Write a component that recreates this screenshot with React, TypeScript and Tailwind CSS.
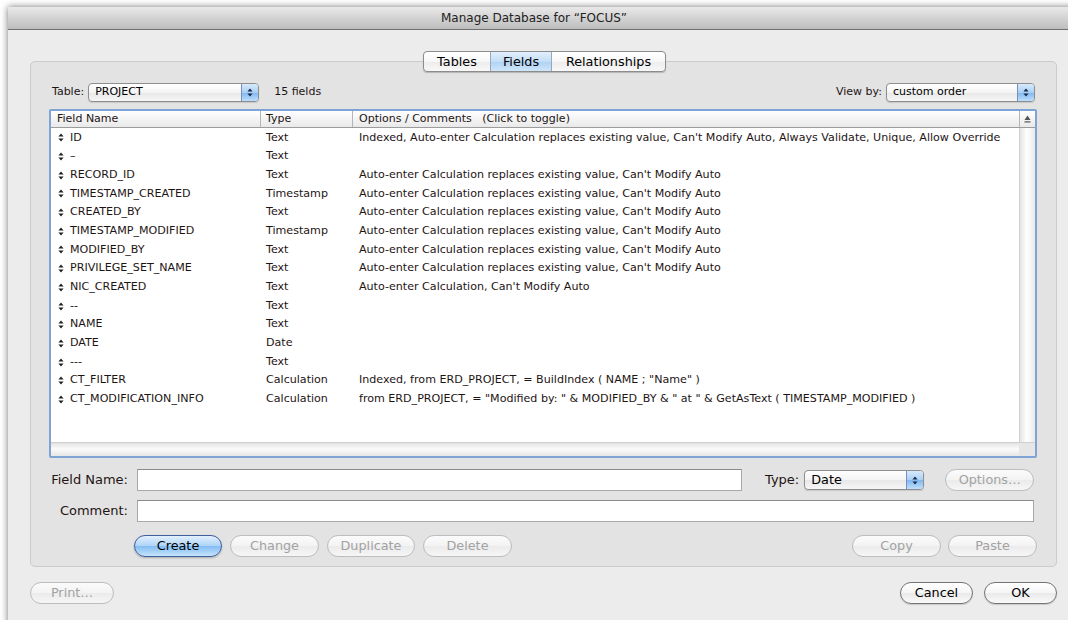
import React from "react";

type Field = { name: string; type: string; options: string };

const AUTO = "Auto-enter Calculation replaces existing value, Can't Modify Auto";

const fields: Field[] = [
  { name: "ID", type: "Text", options: "Indexed, Auto-enter Calculation replaces existing value, Can't Modify Auto, Always Validate, Unique, Allow Override" },
  { name: "–", type: "Text", options: "" },
  { name: "RECORD_ID", type: "Text", options: AUTO },
  { name: "TIMESTAMP_CREATED", type: "Timestamp", options: AUTO },
  { name: "CREATED_BY", type: "Text", options: AUTO },
  { name: "TIMESTAMP_MODIFIED", type: "Timestamp", options: AUTO },
  { name: "MODIFIED_BY", type: "Text", options: AUTO },
  { name: "PRIVILEGE_SET_NAME", type: "Text", options: AUTO },
  { name: "NIC_CREATED", type: "Text", options: "Auto-enter Calculation, Can't Modify Auto" },
  { name: "--", type: "Text", options: "" },
  { name: "NAME", type: "Text", options: "" },
  { name: "DATE", type: "Date", options: "" },
  { name: "---", type: "Text", options: "" },
  { name: "CT_FILTER", type: "Calculation", options: 'Indexed, from ERD_PROJECT, = BuildIndex ( NAME ; "Name" )' },
  { name: "CT_MODIFICATION_INFO", type: "Calculation", options: 'from ERD_PROJECT, = "Modified by: " & MODIFIED_BY & " at " & GetAsText ( TIMESTAMP_MODIFIED )' },
];

const UpDown = ({ className = "" }: { className?: string }) => (
  <svg width="6" height="9" viewBox="0 0 6 9" className={className}>
    <path d="M3 0.5 L5.6 3.6 H0.4 Z M3 8.5 L5.6 5.4 H0.4 Z" fill="currentColor" />
  </svg>
);

const Popup = ({
  value,
  className = "",
  textClass = "text-[11px]",
}: {
  value: string;
  className?: string;
  textClass?: string;
}) => (
  <div
    className={`flex items-stretch overflow-hidden rounded-[4px] border border-[#8e8e8e] bg-[linear-gradient(to_bottom,#ffffff_0%,#f4f4f4_50%,#e8e8e8_51%,#f6f6f6_100%)] shadow-[0_1px_1px_rgba(0,0,0,0.12)] ${className}`}
  >
    <span className={`flex flex-1 items-center truncate pl-[6px] text-black ${textClass}`}>{value}</span>
    <span className="flex w-[17px] items-center justify-center border-l border-[#7a8fb8] bg-[linear-gradient(to_bottom,#d8eafb_0%,#a8d0f6_50%,#7fb7f0_51%,#bfdffb_100%)] text-[#1c2a48]">
      <UpDown />
    </span>
  </div>
);

const Pill = ({
  label,
  width,
  enabled = false,
  primary = false,
}: {
  label: string;
  width: string;
  enabled?: boolean;
  primary?: boolean;
}) => {
  const look = primary
    ? "border-[#3f5f9e] bg-[linear-gradient(to_bottom,#e3f0fd_0%,#afd5f8_48%,#84bdf3_52%,#c6e4fc_100%)] text-black shadow-[0_1px_2px_rgba(0,0,0,0.25)]"
    : enabled
      ? "border-[#747474] bg-[linear-gradient(to_bottom,#ffffff_0%,#f5f5f5_50%,#e9e9e9_51%,#fafafa_100%)] text-black shadow-[0_1px_1px_rgba(0,0,0,0.15)]"
      : "border-[#bdbdbd] bg-[linear-gradient(to_bottom,#fbfbfb_0%,#f3f3f3_50%,#ebebeb_51%,#f6f6f6_100%)] text-[#a2a2a2]";
  return (
    <div className={`flex h-[22px] items-center justify-center rounded-full border text-[12.8px] ${width} ${look}`}>
      {label}
    </div>
  );
};

export default function App() {
  return (
    <div className="h-[620px] w-[1068px] overflow-hidden bg-white pl-2 pt-[7px] font-['DejaVu_Sans',sans-serif] text-[#1e1414]">
      <div className="flex h-[640px] w-[1080px] flex-col bg-[#ececec] shadow-[0_0_7px_rgba(0,0,0,0.55)]">
        {/* title bar */}
        <div className="flex h-[23px] items-center justify-center border-b border-[#6f6f6f] bg-[linear-gradient(to_bottom,#e9e9e9,#bdbdbd)] pr-[28px] text-[12px] text-[#222]">
          Manage Database for “FOCUS”
        </div>

        <div className="flex flex-col pl-[22px] pr-[31px]">
          {/* tabs sitting on the group box edge */}
          <div className="relative z-10 mt-[21px] flex justify-center pl-[2px]">
            <div className="flex h-[21px] overflow-hidden rounded-[4px] border border-[#8c8c8c] bg-[linear-gradient(to_bottom,#ffffff_0%,#f7f7f7_50%,#ececec_51%,#f8f8f8_100%)] text-[12.8px] text-black shadow-[0_1px_1px_rgba(0,0,0,0.2)]">
              <div className="flex w-[66px] items-center justify-center">Tables</div>
              <div className="flex w-[62px] items-center justify-center border-x border-[#9aa6bd] bg-[linear-gradient(to_bottom,#e2effb_0%,#c3def7_50%,#aed2f4_51%,#cfe6fa_100%)]">
                Fields
              </div>
              <div className="flex w-[113px] items-center justify-center">Relationships</div>
            </div>
          </div>

          {/* group box */}
          <div className="-mt-[11px] flex h-[506px] flex-col rounded-[5px] border border-[#cbcbcb] bg-[#e3e3e3] pl-[18px] pr-[19px] pt-[21px]">
            <div className="flex h-[19px] items-center">
              <span className="ml-[3px] text-[11px]">Table:</span>
              <Popup value="PROJECT" className="ml-[4px] h-[19px] w-[171px]" />
              <span className="ml-[15px] text-[11px]">15 fields</span>
              <span className="ml-auto text-[11px]">View by:</span>
              <Popup value="custom order" className="ml-[4px] h-[19px] w-[149px]" />
              <span className="w-[2px]" />
            </div>

            {/* field list */}
            <div className="mt-[7px] flex h-[349px] flex-col rounded-[2px] border-2 border-[#7ea4d6] bg-white">
              <div className="flex h-[17px] border-b border-[#9c9c9c] bg-[linear-gradient(to_bottom,#ffffff,#e9e9e9)] text-[11px] leading-[16px]">
                <div className="w-[210px] border-r border-[#b5b5b5] pl-[6px]">Field Name</div>
                <div className="w-[92px] border-r border-[#b5b5b5] pl-[5px]">Type</div>
                <div className="flex-1 border-r border-[#b5b5b5] pl-[6px]">Options / Comments&nbsp;&nbsp; (Click to toggle)</div>
                <div className="flex w-[15px] items-center justify-center text-[#555]">
                  <svg width="7" height="8" viewBox="0 0 7 8">
                    <path d="M3.5 0.5 L6.5 5 H0.5 Z" fill="currentColor" />
                    <rect x="0.5" y="6.3" width="6" height="1.2" fill="currentColor" />
                  </svg>
                </div>
              </div>

              <div className="flex flex-1">
                <div className="flex flex-1 flex-col pt-[0.5px]">
                  {fields.map((f) => (
                    <div key={f.name} className="flex h-[18.7px] items-center text-[11.1px] whitespace-nowrap">
                      <div className="flex w-[210px] items-center">
                        <UpDown className="ml-[7px] text-[#222]" />
                        <span className="ml-[6px]">{f.name}</span>
                      </div>
                      <div className="w-[92px] pl-[5px]">{f.type}</div>
                      <div className="flex-1 pl-[6px]">{f.options}</div>
                    </div>
                  ))}
                </div>
                <div className="w-[16px] border-l border-[#d0d0d0] bg-[linear-gradient(to_right,#e4e4e4,#ffffff_45%,#e9e9e9)]" />
              </div>

              <div className="flex h-[14px] border-t border-[#cfcfcf]">
                <div className="flex-1 bg-[linear-gradient(to_bottom,#e2e2e2,#fbfbfb_45%,#e6e6e6)]" />
                <div className="w-[16px] bg-[#e6e6e6]" />
              </div>
            </div>

            {/* field editor */}
            <div className="mt-[11px] flex h-[22px] items-center">
              <span className="w-[88px] pr-[9px] text-right text-[13px]">Field Name:</span>
              <div className="h-[22px] w-[605px] border border-[#a8a8a8] border-t-[#8a8a8a] bg-white" />
              <span className="ml-[23px] text-[13px]">Type:</span>
              <Popup value="Date" className="ml-[5px] h-[20px] w-[120px]" textClass="text-[12.8px]" />
              <div className="ml-[21px]">
                <Pill label="Options…" width="w-[89px]" />
              </div>
            </div>
            <div className="mt-[9px] flex h-[22px] items-center">
              <span className="w-[88px] pr-[9px] text-right text-[13px]">Comment:</span>
              <div className="h-[22px] flex-1 border border-[#a8a8a8] border-t-[#8a8a8a] bg-white" />
              <span className="w-[3px]" />
            </div>

            <div className="mt-[13px] flex items-center">
              <div className="ml-[85px] flex gap-[8px]">
                <Pill label="Create" width="w-[88px]" primary />
                <Pill label="Change" width="w-[89px]" />
                <Pill label="Duplicate" width="w-[88px]" />
                <Pill label="Delete" width="w-[89px]" />
              </div>
              <div className="ml-auto flex gap-[7px]">
                <Pill label="Copy" width="w-[89px]" />
                <Pill label="Paste" width="w-[89px]" />
              </div>
            </div>
          </div>

          {/* dialog buttons */}
          <div className="mt-[15px] flex items-center">
            <Pill label="Print…" width="w-[84px]" />
            <div className="ml-auto flex gap-[11px]">
              <Pill label="Cancel" width="w-[73px]" enabled />
              <Pill label="OK" width="w-[73px]" enabled />
            </div>
          </div>
        </div>
      </div>
    </div>
  );
}
